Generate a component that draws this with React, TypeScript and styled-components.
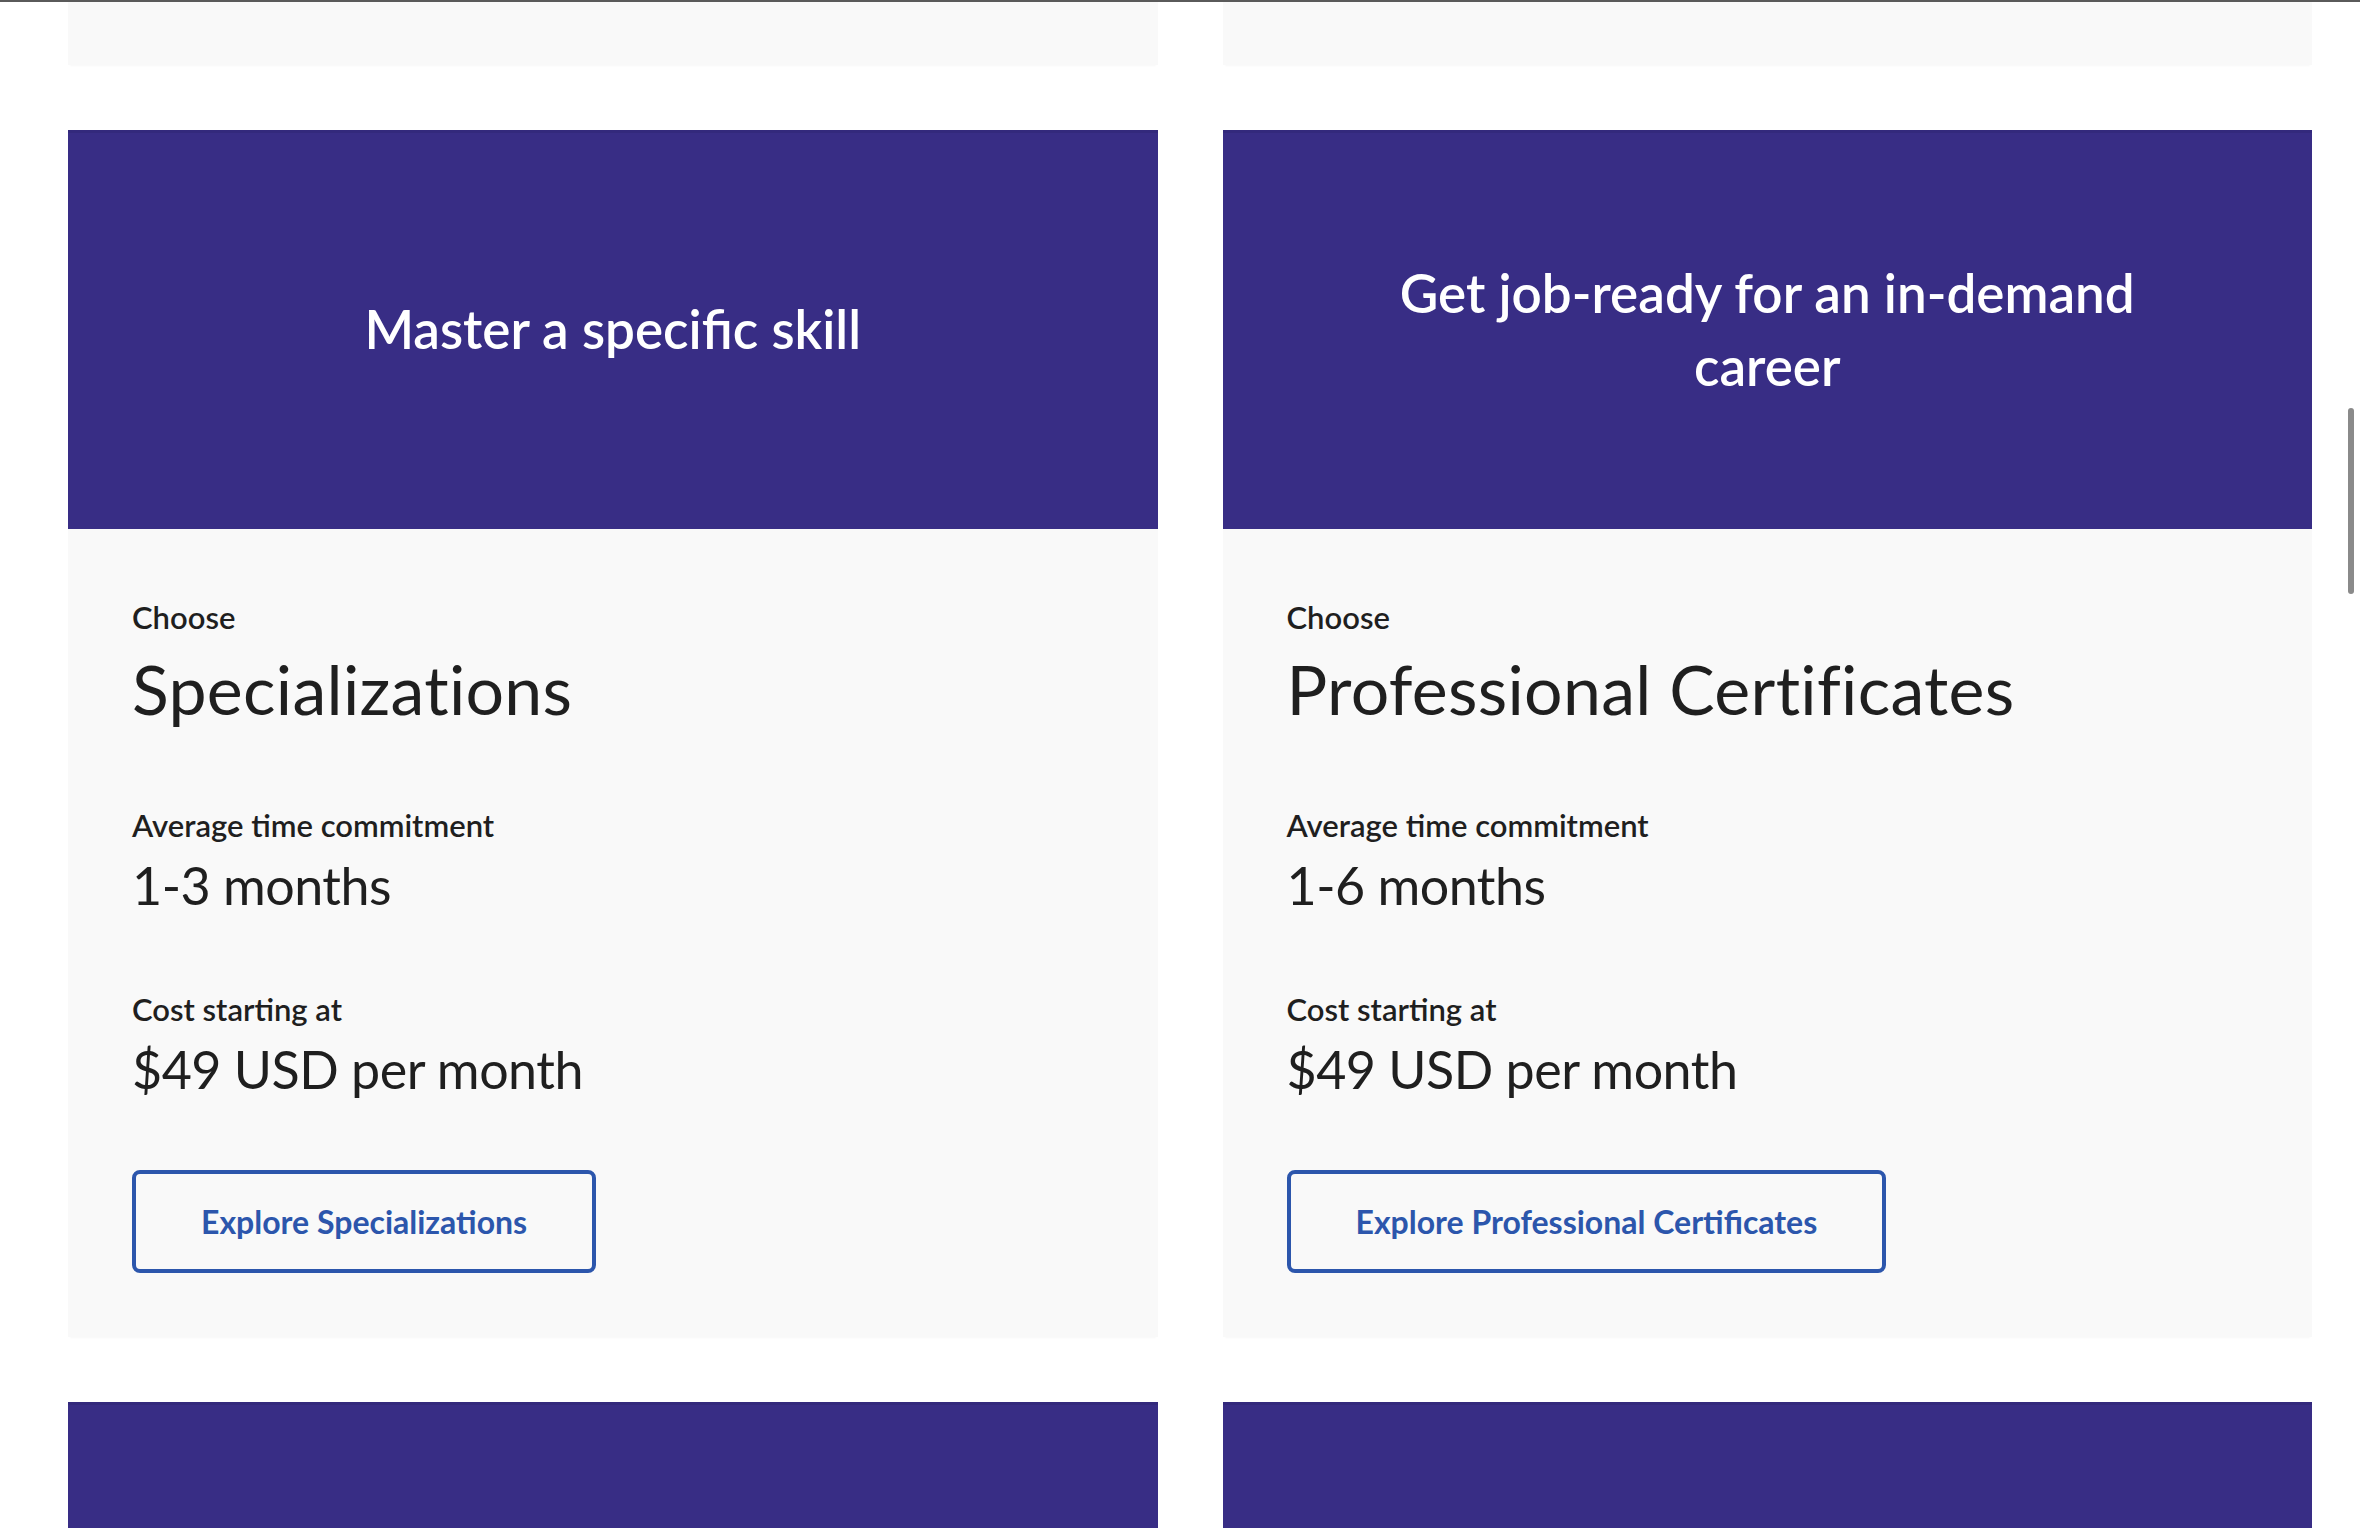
import React from 'react';
import styled, { createGlobalStyle } from 'styled-components';

const GlobalStyle = createGlobalStyle`
    html, body {
        margin : 0;
        padding : 0;
        background-color : #ffffff;
    }
    body {
        font-family : 'Lato', 'Noto Sans', sans-serif;
        color : #1f1f1f;
    }
`

type Program = {
    heading: string;
    name: string;
    time: string;
    cost: string;
    cta: string;
};

const programs: Program[] = [
    { heading: 'Learn a new skill in under 2 hours', name: 'Guided Projects', time: 'Under 2 hours', cost: '$9.99 USD', cta: 'Explore Guided Projects' },
    { heading: 'Learn a new skill', name: 'Courses', time: '4-6 weeks', cost: '$49 USD', cta: 'Explore Courses' },
    { heading: 'Master a specific skill', name: 'Specializations', time: '1-3 months', cost: '$49 USD per month', cta: 'Explore Specializations' },
    { heading: 'Get job-ready for an in-demand career', name: 'Professional Certificates', time: '1-6 months', cost: '$49 USD per month', cta: 'Explore Professional Certificates' },
    { heading: 'Earn career credit toward a Master\u2019s degree', name: 'MasterTrack\u00ae Certificates', time: '4-7 months', cost: '$2,000 USD', cta: 'Explore MasterTrack Certificates' },
    { heading: 'Earn your Bachelor\u2019s or Master\u2019s degree', name: 'Degrees', time: '1-4 years', cost: '$9,000 USD', cta: 'Explore Degrees' },
];

const App = () => {
    return (
        <>
        <GlobalStyle/>
        <Page>
            <TopEdge/>
            <Grid>
                {programs.map((p) => (
                    <Card key={p.name}>
                        <CardHeader>
                            <HeaderTitle>{p.heading}</HeaderTitle>
                        </CardHeader>
                        <CardBody>
                            <Eyebrow>Choose</Eyebrow>
                            <ProgramName>{p.name}</ProgramName>
                            <Stat>
                                <StatLabel>Average time commitment</StatLabel>
                                <StatValue>{p.time}</StatValue>
                            </Stat>
                            <Stat>
                                <StatLabel>Cost starting at</StatLabel>
                                <StatValue>{p.cost}</StatValue>
                            </Stat>
                            <ExploreButton>{p.cta}</ExploreButton>
                        </CardBody>
                    </Card>
                ))}
            </Grid>
            <ScrollThumb/>
        </Page>
        </>
    )
}

const Page = styled.div`
    position : relative;
    width : 2360px;
    height : 1528px;
    overflow : hidden;
    background-color : #ffffff;
`

const TopEdge = styled.div`
    position : absolute;
    top : 0;
    left : 0;
    right : 0;
    height : 2px;
    background-color : #5a5a5a;
    z-index : 3;
`

const ScrollThumb = styled.div`
    position : absolute;
    top : 408px;
    right : 6px;
    width : 6px;
    height : 186px;
    border-radius : 3px;
    background-color : #8a8a8a;
`

const Grid = styled.div`
    display : grid;
    grid-template-columns : 1fr 1fr;
    column-gap : 65px;
    row-gap : 65px;
    padding : 0 48px 0 68px;
    margin-top : -1142px;
`

const Card = styled.div`
    display : flex;
    flex-direction : column;
    box-shadow : 0 3px 2px -2px rgba(0, 0, 0, 0.03);
`

const CardHeader = styled.div`
    height : 399px;
    background-color : #382d85;
    border-top : 3px solid #33297c;
    box-sizing : border-box;
    display : flex;
    align-items : center;
    justify-content : center;
    padding : 0 128px 5px;
`

const HeaderTitle = styled.h2`
    margin : 0;
    color : #ffffff;
    font-size : 53px;
    font-weight : 600;
    line-height : 73px;
    text-align : center;
`

const CardBody = styled.div`
    flex : 1;
    background-color : #f9f9f9;
    padding : 64px;
    display : flex;
    flex-direction : column;
    align-items : flex-start;
`

const Eyebrow = styled.span`
    font-size : 31px;
    font-weight : 600;
    line-height : 48px;
`

const ProgramName = styled.h3`
    margin : 0;
    font-size : 68px;
    font-weight : 400;
    line-height : 96px;
    letter-spacing : 0.3px;
`

const Stat = styled.div`
    margin-top : 64px;
    display : flex;
    flex-direction : column;
`

const StatLabel = styled.span`
    font-size : 31px;
    font-weight : 600;
    line-height : 48px;
`

const StatValue = styled.span`
    font-size : 52px;
    font-weight : 400;
    line-height : 72px;
    letter-spacing : -0.5px;
`

const ExploreButton = styled.button`
    margin-top : 65px;
    height : 103px;
    padding : 0 65px;
    background : transparent;
    border : 4px solid #2c56ac;
    border-radius : 8px;
    color : #2c56ac;
    font-family : inherit;
    font-size : 32px;
    font-weight : 700;
    line-height : 48px;
    cursor : pointer;
`

export default App;
